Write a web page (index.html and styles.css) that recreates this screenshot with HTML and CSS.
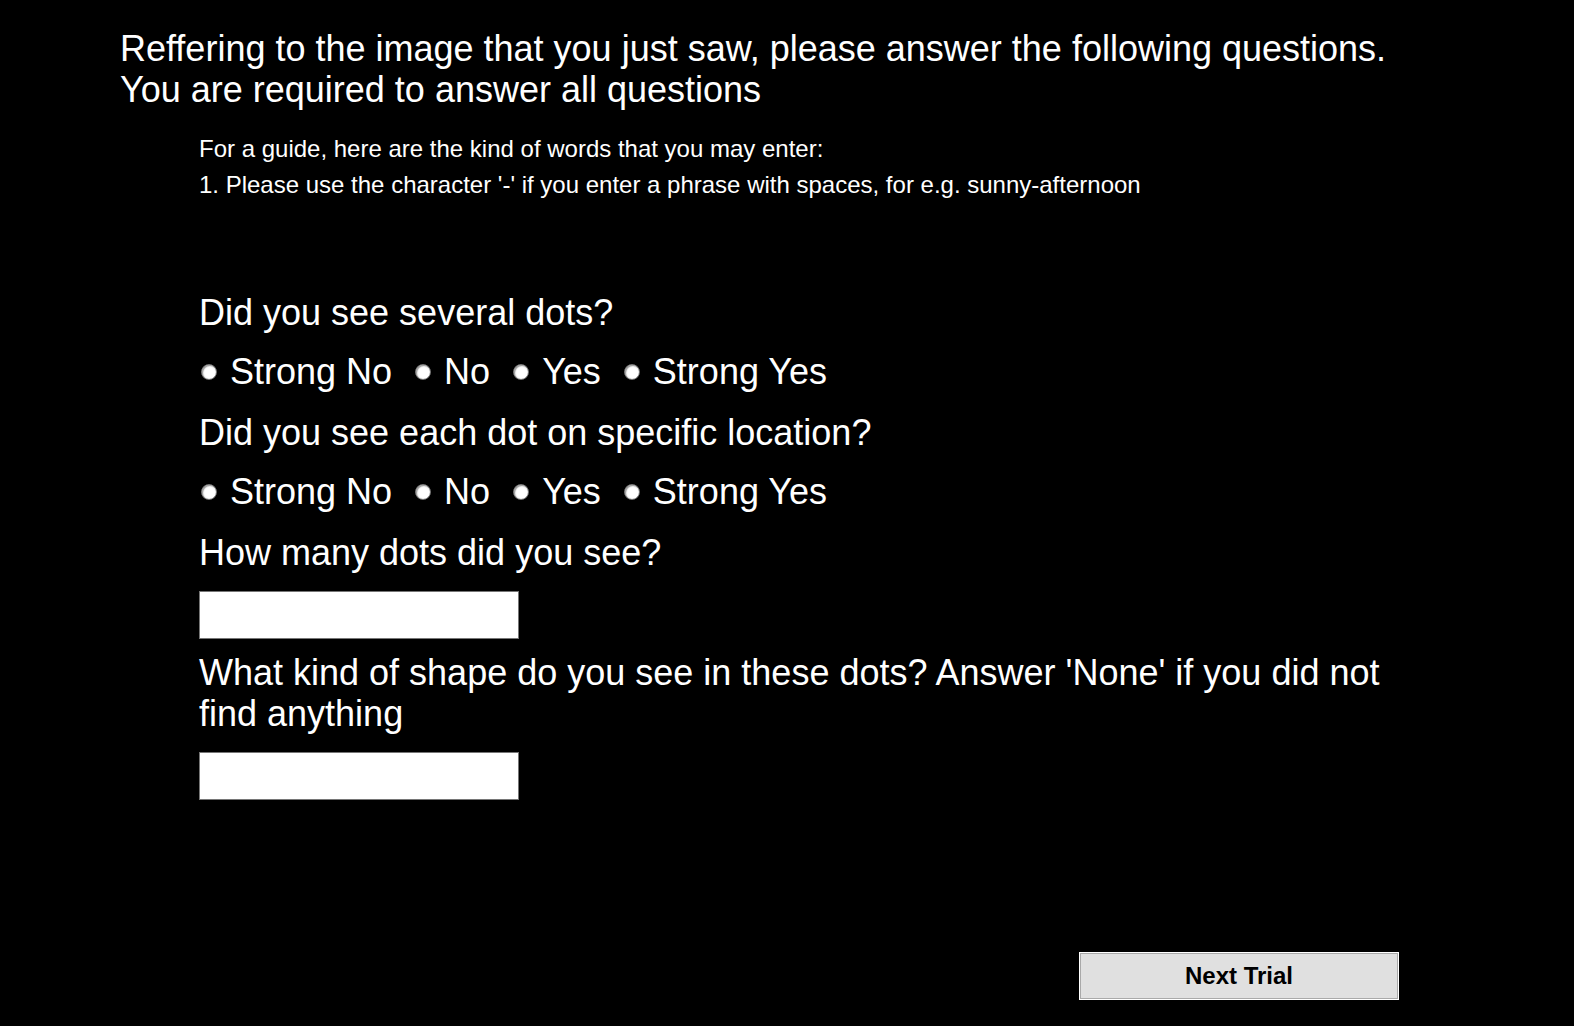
FILE: index.html
```html
<!DOCTYPE html>
<html lang="en">
<head>
<meta charset="utf-8">
<title>Questions</title>
<link rel="stylesheet" href="styles.css">
</head>
<body>
<div class="page">
  <h1 class="title">Reffering to the image that you just saw, please answer the following questions.<br>You are required to answer all questions</h1>
  <div class="guide">
    <div class="guide-line">For a guide, here are the kind of words that you may enter:</div>
    <div class="guide-line">1. Please use the character '-' if you enter a phrase with spaces, for e.g. sunny-afternoon</div>
  </div>
  <form class="form">
    <div class="q">Did you see several dots?</div>
    <div class="opts">
      <label class="opt"><input type="radio" name="q1" class="radio"><span>Strong No</span></label>
      <label class="opt"><input type="radio" name="q1" class="radio"><span>No</span></label>
      <label class="opt"><input type="radio" name="q1" class="radio"><span>Yes</span></label>
      <label class="opt"><input type="radio" name="q1" class="radio"><span>Strong Yes</span></label>
    </div>
    <div class="q">Did you see each dot on specific location?</div>
    <div class="opts">
      <label class="opt"><input type="radio" name="q2" class="radio"><span>Strong No</span></label>
      <label class="opt"><input type="radio" name="q2" class="radio"><span>No</span></label>
      <label class="opt"><input type="radio" name="q2" class="radio"><span>Yes</span></label>
      <label class="opt"><input type="radio" name="q2" class="radio"><span>Strong Yes</span></label>
    </div>
    <div class="q">How many dots did you see?</div>
    <input type="text" class="text-input">
    <div class="q">What kind of shape do you see in these dots? Answer 'None' if you did not find anything</div>
    <input type="text" class="text-input">
  </form>
  <div class="footer">
    <button type="button" class="next-btn">Next Trial</button>
  </div>
</div>
</body>
</html>
```
FILE: styles.css
```css
html, body {
  margin: 0;
  padding: 0;
  background: #000;
}

body {
  font-family: "Liberation Sans", Arial, sans-serif;
  color: #fff;
}

.page {
  box-sizing: border-box;
  min-height: 100vh;
  width: 1280px;
  margin-left: 120px;
  padding-top: 28px;
  padding-bottom: 26px;
  display: flex;
  flex-direction: column;
}

.title {
  margin: 0;
  font-size: 36px;
  font-weight: normal;
  line-height: 41px;
}

.guide {
  margin-top: 21px;
  padding-left: 79px;
  font-size: 24px;
  line-height: 36px;
}

.form {
  margin: 89px 0 0 0;
  padding-left: 79px;
  display: flex;
  flex-direction: column;
  align-items: flex-start;
}

.q {
  font-size: 36px;
  line-height: 41px;
  margin-bottom: 18px;
}

.opts {
  display: flex;
  align-items: center;
  gap: 21px;
  font-size: 36px;
  line-height: 41px;
  margin-bottom: 20px;
}

.opt {
  display: flex;
  align-items: center;
  gap: 13px;
}

.radio {
  appearance: none;
  -webkit-appearance: none;
  margin: 0 0 0 2px;
  width: 16px;
  height: 16px;
  border-radius: 50%;
  border: 1px solid #7a7a7a;
  background: radial-gradient(circle at 55% 55%, #ffffff 45%, #dcdcdc 85%);
  box-shadow: inset 1px 1px 1px rgba(0, 0, 0, 0.35);
  box-sizing: border-box;
}

.text-input {
  box-sizing: border-box;
  width: 320px;
  height: 48px;
  margin: 0 0 13px 0;
  border: 1px solid #767676;
  background: #fff;
  font-family: "Liberation Sans", Arial, sans-serif;
  font-size: 24px;
  padding: 0 6px;
}

.footer {
  margin-top: auto;
  display: flex;
  justify-content: flex-end;
}

.next-btn {
  box-sizing: border-box;
  width: 320px;
  height: 48px;
  margin-right: 1px;
  background: #e0e0e0;
  border: 1px solid #fff;
  box-shadow: inset 0 0 0 1px #a9a9a9;
  font-family: "Liberation Sans", Arial, sans-serif;
  font-weight: bold;
  font-size: 24px;
  color: #000;
  padding: 0;
}
```
